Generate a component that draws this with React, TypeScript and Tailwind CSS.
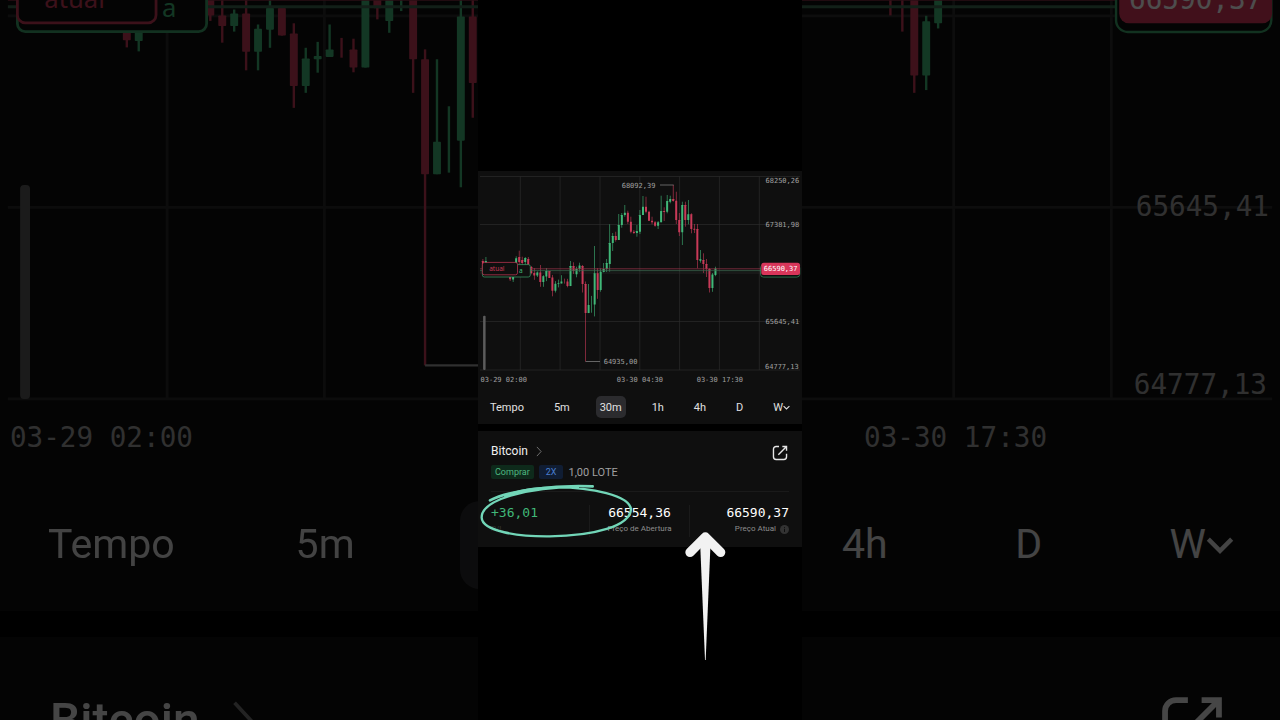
import { clsx } from 'clsx';

interface Candle {
  high: number;
  top: number;
  bottom: number;
  low: number;
  up: boolean;
}

type Row = [slot: number, high: number, top: number, bottom: number, low: number, up: 0 | 1];

// Slot 0 is the candle that holds the lowest price of the chart
const rows: Row[] = [
  [-34, 88, 90, 97, 100, 0],
  [-33, 86, 90, 98, 100, 1],
  [-25, 97, 99, 108.2, 110, 0],
  [-24, 97, 99, 108.4, 111, 1],
  [-23, 85.3, 87.3, 92, 96, 1],
  [-22, 79.7, 86, 91, 95, 0],
  [-21, 85.7, 89, 92, 95, 0],
  [-20, 86, 87, 91, 95, 1],
  [-19, 86, 88, 94, 96, 0],
  [-18, 95, 96, 101.9, 103.3, 0],
  [-17, 97, 101.9, 104.6, 108.8, 0],
  [-16, 100.4, 101.4, 104.6, 106, 1],
  [-15, 94, 101.4, 111.1, 115.8, 0],
  [-14, 104.2, 105.3, 111.1, 115.8, 1],
  [-13, 97, 100, 105.5, 110.1, 1],
  [-12, 100, 100, 107, 107, 0],
  [-11, 103.9, 106.5, 119.8, 125.3, 0],
  [-10, 110.1, 112.8, 119.8, 121.5, 1],
  [-9, 108.6, 112.2, 113, 116.4, 1],
  [-8, 104.2, 110.5, 112.4, 112.4, 1],
  [-7, 107.6, 110, 110, 112.6, 0],
  [-6, 107.8, 110.5, 115.1, 116.3, 0],
  [-5, 90, 95, 115.1, 115.1, 1],
  [-4, 91.3, 95, 100.1, 102.9, 0],
  [-3, 95.7, 98, 103.3, 106.3, 1],
  [-2, 91.7, 94.5, 98, 100.8, 1],
  [-1, 94, 95, 113, 121.5, 0],
  [0, 110.5, 113, 142.1, 190.5, 0],
  [1, 113, 133.9, 142.1, 142.1, 1],
  [2, 124.9, 133, 133, 141.7, 1],
  [3, 75, 102.2, 133.6, 145.4, 1],
  [4, 97, 102.2, 119, 127.8, 0],
  [5, 97.3, 100.7, 119, 120.7, 1],
  [6, 92, 98, 101, 101.3, 1],
  [7, 88, 92, 98, 101, 1],
  [8, 53.3, 72, 93, 100.7, 1],
  [9, 62, 65, 72, 80, 1],
  [10, 60.7, 65, 69, 70.7, 0],
  [11, 43, 54, 69, 69, 1],
  [12, 42, 44, 54, 56.7, 1],
  [13, 34, 41.7, 44, 45.7, 1],
  [14, 39.7, 41.7, 50.7, 53, 0],
  [15, 45.7, 50.7, 60.7, 62.3, 0],
  [16, 59, 60.7, 62, 63, 0],
  [17, 54, 60, 62, 65.7, 1],
  [18, 39, 44, 60.7, 63, 1],
  [19, 25, 35.7, 44, 44, 1],
  [20, 25.7, 35.7, 40.7, 42.3, 0],
  [21, 39.7, 40.7, 49.7, 50, 0],
  [22, 45.7, 49.7, 51.3, 53.3, 0],
  [23, 50, 51.3, 54.7, 55.7, 0],
  [24, 50, 51.3, 54.7, 58, 1],
  [25, 24.7, 40, 51.3, 51.3, 1],
  [26, 36.3, 40, 41, 50, 0],
  [27, 24, 30, 40.7, 42.3, 1],
  [28, 24.7, 28, 30.7, 32.3, 1],
  [29, 14, 28, 30, 30.7, 0],
  [30, 20.7, 29.7, 49, 53, 0],
  [31, 42, 49, 61.3, 65, 0],
  [32, 30.7, 34, 61.3, 74, 1],
  [33, 30.7, 34, 49, 55.7, 0],
  [34, 29, 43.3, 49, 53.3, 1],
  [35, 42.3, 43.3, 58, 62.3, 0],
  [36, 53, 57.7, 58.7, 62, 0],
  [37, 53, 58, 89, 97.3, 0],
  [38, 79, 88.3, 89.7, 91.7, 1],
  [39, 82.3, 89, 93, 101.9, 0],
  [40, 88, 93, 98, 106, 0],
  [41, 97, 98, 117.1, 121.5, 0],
  [42, 102, 103.4, 117.1, 120.8, 1],
  [43, 95.7, 97.6, 103.9, 105.2, 1],
];

const candles: (Candle & { x: number })[] = rows.map(([slot, high, top, bottom, low, up]) => ({
  x: 107.6 + slot * 3.02,
  high,
  top,
  bottom,
  low,
  up: up === 1,
}));

const gridX = [42.3, 82.1, 122, 161.8, 201.6, 241.4, 281.3];
const gridY = [5.5, 53.5, 102, 150.5, 199];

const labels = [
  { x: 287.5, y: 12, text: '68250,26' },
  { x: 287.5, y: 56, text: '67381,98' },
  { x: 287.5, y: 152.7, text: '65645,41' },
  { x: 287, y: 197.8, text: '64777,13' },
  { x: 2.5, y: 211.2, text: '03-29 02:00' },
  { x: 138.7, y: 211.2, text: '03-30 04:30' },
  { x: 218.7, y: 211.2, text: '03-30 17:30' },
  { x: 143.7, y: 16.8, text: '68092,39' },
  { x: 125.7, y: 193, text: '64935,00' },
];

const MONO = "font-['DejaVu_Sans_Mono',monospace]";

interface View {
  x: number;
  y: number;
  width: number;
  height: number;
}

function Chart({ view }: { view: View }) {
  const right = view.x + view.width;
  const inView = (x: number, y: number) => x >= view.x && x < right && y >= view.y;

  return (
    <svg
      viewBox={`${view.x} ${view.y} ${view.width} ${view.height}`}
      className={clsx('block w-full', MONO)}
      role="img"
      aria-label="Bitcoin"
    >
      <g stroke="#2b2b2b" strokeWidth="0.7">
        {gridX.map((x) => (
          <line key={x} x1={x} x2={x} y1="5.5" y2="199" />
        ))}
        {gridY.map((y) => (
          <line key={y} x1="2" x2="322" y1={y} y2={y} />
        ))}
      </g>

      <rect x="5.1" y="144.8" width="2.5" height="54.2" rx="1" fill="#5c5c5c" />

      {candles.map((c) => (
        <g key={c.x} fill={c.up ? '#40b878' : '#c93a58'}>
          <rect x={c.x - 0.3} y={c.high} width="0.6" height={c.low - c.high} />
          <rect x={c.x - 1} y={c.top} width="2" height={c.bottom - c.top} rx="0.2" />
        </g>
      ))}

      {/* Open and current price */}
      <line x1="2" x2="284" y1="97.8" y2="97.8" stroke="#8c3145" strokeWidth="0.8" />
      <line x1="2" x2="284" y1="99.7" y2="99.7" stroke="#3c6a51" strokeWidth="0.8" />

      <g fontSize="7" fill="#a0a0a0">
        {labels
          .filter((l) => inView(l.x, l.y))
          .map((l) => (
            <text key={l.text} x={l.x} y={l.y}>
              {l.text}
            </text>
          ))}
      </g>
      <path d="M182 14h13.7M107.6 190.5H122" fill="none" stroke="#a0a0a0" strokeWidth="0.6" />

      {inView(11.2, 100) && (
        <g strokeWidth="0.7" className="font-['Noto_Sans',sans-serif]" fontSize="6.5">
          <rect x="4.4" y="93.6" width="47.9" height="12.4" rx="2" fill="#0f0f0f" stroke="#3da56c" />
          <text x="41" y="102.2" fill="#40b878">a</text>
          <rect x="4.4" y="91.4" width="35.1" height="12.4" rx="2" fill="#0f0f0f" stroke="#c93a58" />
          <text x="11.2" y="100" fill="#c93a58">atual</text>
        </g>
      )}

      {inView(285.8, 100.2) && (
        <g>
          <rect x="282.5" y="94" width="39.3" height="12.1" rx="3" fill="#0f0f0f" stroke="#3da56c" strokeWidth="0.6" />
          <rect x="283.3" y="91.8" width="38.7" height="12.1" rx="2.5" fill="#d8365a" />
          <text x="285.8" y="100.2" fontSize="7" fill="#ffffff">66590,37</text>
        </g>
      )}
    </svg>
  );
}

function Caret({ className }: { className: string }) {
  return (
    <svg viewBox="0 0 12 12" className={className} fill="none" stroke="currentColor" strokeWidth="1.9">
      <path d="M1 3.5 6 8.5 11 3.5" />
    </svg>
  );
}

function Chevron({ className }: { className: string }) {
  return (
    <svg viewBox="0 0 6 12" className={className} fill="none" stroke="#777777" strokeWidth="1">
      <path d="M0.7 1 5.3 6 0.7 11" />
    </svg>
  );
}

function ShareIcon({ className }: { className: string }) {
  return (
    <svg viewBox="0 0 24 24" className={className} fill="none" stroke="#e6e6e6" strokeWidth="2.1">
      <path d="M10.5 2.2H6.2a4 4 0 0 0-4 4v11.6a4 4 0 0 0 4 4h11.6a4 4 0 0 0 4-4V13" />
      <path d="M9.5 14.5 21 3M15.5 2.2h6.3v6.3" />
    </svg>
  );
}

const intervals = ['Tempo', '5m', '30m', '1h', '4h', 'D', 'W'];

function Intervals() {
  return (
    <div className="flex h-[38px] items-center justify-between px-3 pt-1 text-[11px] leading-none text-[#e0e0e0]">
      {intervals.map((name) => (
        <button
          key={name}
          type="button"
          className={clsx('flex h-[22px] items-center', name === '30m' && '-mx-1 rounded-[5px] bg-[#2b2b2e] px-1')}
        >
          {name}
          {name === 'W' && <Caret className="size-[7px]" />}
        </button>
      ))}
    </div>
  );
}

function Position() {
  return (
    <section className="relative bg-[#0f0f0f] px-[13px] pb-2.5 pt-2.5">
      <div className="flex items-center justify-between">
        <a href="#bitcoin" className="flex items-center gap-2 text-xs text-[#f0f0f0]">
          Bitcoin
          <Chevron className="h-[11px] w-[6px]" />
        </a>
        <button type="button" aria-label="Abrir" className="mt-1 pr-px">
          <ShareIcon className="size-4" />
        </button>
      </div>

      <div className="mt-1 flex items-center gap-[5px] leading-none">
        <span className="rounded-xs bg-[#0e2a1b] px-1 py-0.5 text-[9px] leading-[10px] text-[#4fb980]">Comprar</span>
        <span className="rounded-xs bg-[#101d33] px-[7px] py-0.5 text-[9px] leading-[10px] text-[#4a7fd0]">2X</span>
        <span className="text-[11px] text-[#a0a0a0]">1,00 LOTE</span>
      </div>

      <dl className="mt-3 grid grid-cols-3 divide-x divide-[#1a1a1a] border-t border-[#1a1a1a] pt-[13px]">
        <div className="flex flex-col items-start">
          <dd className={clsx('order-1 text-[13px] leading-4 text-[#40b878]', MONO)}>+36,01</dd>
          <dt className="order-2 text-[8px] leading-4 text-[#333333]">P/L</dt>
        </div>
        <div className="flex flex-col items-center">
          <dd className={clsx('order-1 text-[13px] leading-4 text-[#ffffff]', MONO)}>66554,36</dd>
          <dt className="order-2 text-[8px] leading-4 text-[#8c8c8c]">Preço de Abertura</dt>
        </div>
        <div className="flex flex-col items-end">
          <dd className={clsx('order-1 text-[13px] leading-4 text-[#ffffff]', MONO)}>66590,37</dd>
          <dt className="order-2 flex items-center gap-1 text-[8px] leading-4 text-[#8c8c8c]">
            Preço Atual
            <svg viewBox="0 0 10 10" className="size-[9px]">
              <circle cx="5" cy="5" r="5" fill="#333333" />
              <path d="M5 2.2v1M5 4.2v3.6" stroke="#0f0f0f" strokeWidth="1.1" />
            </svg>
          </dt>
        </div>
      </dl>

      {/* Hand-drawn marks over the card */}
      <svg viewBox="0 36 480 174" className="absolute left-0 top-[51px] h-[58px] w-[160px]" fill="none" stroke="#72d6b8" strokeLinecap="round">
        <path d="M36 91C90 62 230 44 344 49" strokeWidth="8" />
        <path
          d="M300 51C170 50 10 84 11 143C13 184 120 200 215 199C350 198 455 168 459 118C455 76 340 52 236 52C180 52 120 62 80 77"
          strokeWidth="7"
        />
      </svg>
      <svg viewBox="132 300 126 396" className="absolute left-[206px] top-[99px] h-[132px] w-[42px]">
        <path d="M150 367 196 321 242 367" fill="none" stroke="#f2f2f2" strokeWidth="28" strokeLinecap="round" strokeLinejoin="round" />
        <path d="M180 330h32L197 690h-2z" fill="#f2f2f2" />
      </svg>
    </section>
  );
}

function LeftBackdrop() {
  return (
    <div className="min-w-0 flex-1 overflow-hidden opacity-30" aria-hidden="true">
      <div className="bg-[#0f0f0f]">
        <Chart view={{ x: 0, y: 98, width: 121, height: 117 }} />
        <div className="flex h-[149px] items-center gap-[121px] pl-12 pt-4 text-[41px] leading-none text-[#e0e0e0]">
          <button type="button" tabIndex={-1}>Tempo</button>
          <button type="button" tabIndex={-1}>5m</button>
          <div className="-ml-4 h-[88px] w-[118px] shrink-0 rounded-[20px] bg-[#2b2b2e]" />
        </div>
      </div>
      <div className="mt-[26px] flex items-center gap-8 bg-[#0f0f0f] pb-12 pl-[50px] pt-[52px] text-5xl font-medium leading-[64px] text-[#e8e8e8]">
        Bitcoin
        <Chevron className="h-[44px] w-[22px]" />
      </div>
    </div>
  );
}

function RightBackdrop() {
  return (
    <div className="min-w-0 flex-1 overflow-hidden opacity-30" aria-hidden="true">
      <div className="bg-[#0f0f0f]">
        <Chart view={{ x: 203, y: 98, width: 121, height: 117 }} />
        <div className="flex h-[149px] items-center justify-between pl-10 pr-[46px] pt-4 text-[41px] leading-none text-[#e0e0e0]">
          <button type="button" tabIndex={-1}>4h</button>
          <button type="button" tabIndex={-1}>D</button>
          <button type="button" tabIndex={-1} className="flex items-center">
            W
            <Caret className="size-7" />
          </button>
        </div>
      </div>
      <div className="mt-[26px] flex justify-end bg-[#0f0f0f] pb-12 pr-[55px] pt-[57px]">
        <ShareIcon className="size-[66px]" />
      </div>
    </div>
  );
}

export default function App() {
  return (
    <div className="flex h-screen overflow-hidden bg-black font-[Roboto,sans-serif]">
      <LeftBackdrop />
      <main className="flex w-[324px] shrink-0 flex-col justify-center bg-black pb-0.5">
        <div className="mb-[7px] bg-[#0f0f0f]">
          <Chart view={{ x: 0, y: 0, width: 324, height: 215 }} />
          <Intervals />
        </div>
        <Position />
      </main>
      <RightBackdrop />
    </div>
  );
}
